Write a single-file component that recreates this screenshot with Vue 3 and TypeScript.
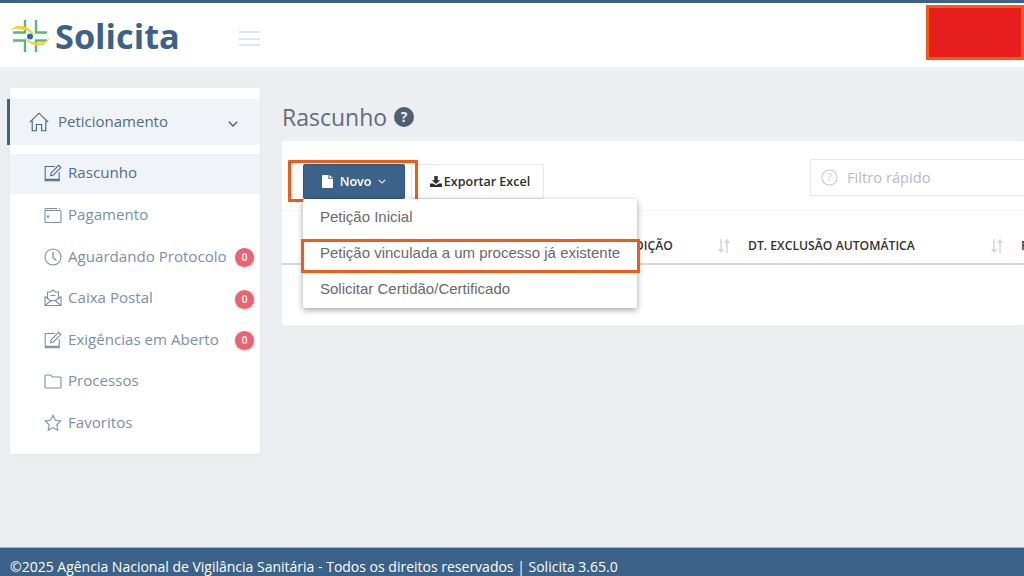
<script setup lang="ts">
interface NavItem { label: string; icon: string; badge?: number; active?: boolean }
const items: NavItem[] = [
  { label: 'Rascunho', icon: 'edit', active: true },
  { label: 'Pagamento', icon: 'wallet' },
  { label: 'Aguardando Protocolo', icon: 'clock', badge: 0 },
  { label: 'Caixa Postal', icon: 'mail', badge: 0 },
  { label: 'Exigências em Aberto', icon: 'edit', badge: 0 },
  { label: 'Processos', icon: 'folder' },
  { label: 'Favoritos', icon: 'star' },
]
const menu = ['Petição Inicial', 'Petição vinculada a um processo já existente', 'Solicitar Certidão/Certificado']
</script>

<template>
  <div class="page">
    <header class="topbar">
      <div class="brand">
        <svg class="logo" viewBox="0 0 40 34" width="40" height="34">
          <g fill="none" stroke="#56b97c" stroke-width="2.400">
            <path d="M15 1V13.500H3" />
            <path d="M26 1V13.500H37" />
            <path d="M3 21.500H15V33" />
            <path d="M37 21.500H26V33" />
          </g>
          <path d="M0 12C8 2 20 7 27 19C21 12 9 7 0 12Z" fill="#f3d432" />
          <path d="M40 19C33 31 20 28 13 17C20 24 31 27 40 19Z" fill="#f3d432" />
          <circle cx="20" cy="17.500" r="3" fill="#1f6fc0" />
        </svg>
        <span class="brand-name">Solicita</span>
      </div>
      <div class="burger"><i></i><i></i><i></i></div>
      <div class="redact"></div>
    </header>

    <div class="body">
      <aside class="sidebar">
        <div class="group">
          <svg class="home" viewBox="0 0 20 20" width="20" height="20" fill="none" stroke="#3d6286" stroke-width="1.100">
            <path d="M.8 10.200 10 1.200l9.200 9M3.200 8.500v10.200h4.200v-6.200h5.200v6.200h4.200V8.500" />
          </svg>
          <span class="group-label">Peticionamento</span>
          <svg class="chev" viewBox="0 0 10 6" width="10" height="6" fill="none" stroke="#3d6286" stroke-width="1.400"><path d="M.8.800 5 5 9.200.8" /></svg>
        </div>
        <ul class="nav">
          <li v-for="it in items" :key="it.label" class="nav-item" :class="{ active: it.active }">
            <svg class="nav-icon" viewBox="0 0 18 18" width="18" height="18" fill="none" stroke="currentColor" stroke-width="1.100">
              <template v-if="it.icon === 'edit'">
                <path d="M11 2.500H1.200v14.300h14V8" />
                <path d="M1.200 15.600h14" stroke-width="1.600" />
                <path d="M6.500 11.800l.7-3L14.600 1.400l2.200 2.200-7.400 7.400z" />
              </template>
              <template v-else-if="it.icon === 'wallet'">
                <path d="M1 5.500V15.500a1 1 0 0 0 1 1h14a1 1 0 0 0 1-1V5.500a1 1 0 0 0-1-1H2a1 1 0 0 0-1 1z" />
                <path d="M1 5V3.500a1 1 0 0 1 1-1h11M15 2.500h1" />
                <circle cx="4" cy="10.500" r=".7" fill="currentColor" />
              </template>
              <template v-else-if="it.icon === 'clock'">
                <circle cx="9" cy="9" r="8" />
                <path d="M9 3.800V9.400l3.400 3" stroke-width="1.300" />
              </template>
              <template v-else-if="it.icon === 'mail'">
                <path d="M1 7.500v9h16v-9M1 16.500 7 11.500h4l6 5" />
                <path d="M1 7.500 3.500 9.500V3h3L9 1l2.500 2h3v6.500l2.500-2M3.500 9.500 7 12M14.500 9.500 11 12" />
                <path d="M6.500 6.500h5" />
              </template>
              <template v-else-if="it.icon === 'folder'">
                <path d="M1 4a1 1 0 0 1 1-1h4.500l2 2H16a1 1 0 0 1 1 1v9a1 1 0 0 1-1 1H2a1 1 0 0 1-1-1z" />
              </template>
              <template v-else>
                <path d="M9 1.300l2.400 5 5.400.7-4 3.800 1 5.400L9 13.600l-4.800 2.600 1-5.400-4-3.800 5.400-.7z" />
              </template>
            </svg>
            <span class="nav-label">{{ it.label }}</span>
            <span v-if="it.badge !== undefined" class="badge">{{ it.badge }}</span>
          </li>
        </ul>
      </aside>

      <main class="content">
        <h1 class="title">
          Rascunho
          <svg viewBox="0 0 20 20" width="20" height="20"><circle cx="10" cy="10" r="10" fill="#4f5f6b" /><text x="10" y="15" text-anchor="middle" font-size="14" font-weight="700" font-family="Open Sans, sans-serif" fill="#eceef2">?</text></svg>
        </h1>
        <section class="card">
          <div class="toolbar">
            <div class="btn-wrap">
              <button class="btn primary">
                <svg viewBox="0 0 12 14" width="11" height="13"><path d="M0 1a1 1 0 0 1 1-1h6v4h5v9a1 1 0 0 1-1 1H1a1 1 0 0 1-1-1z M8 0l4 3H8z" fill="#fff" /></svg>
                Novo
                <svg viewBox="0 0 10 6" width="8" height="5" fill="none" stroke="#fff" stroke-width="1.300"><path d="M1 1l4 4 4-4" /></svg>
              </button>
              <div class="mark mark-btn"></div>
              <ul class="dropdown">
                <li v-for="m in menu" :key="m">{{ m }}</li>
              </ul>
              <div class="mark mark-row"></div>
            </div>
            <button class="btn export">
              <svg viewBox="0 0 14 13" width="12" height="11" fill="#2d2d2d"><path d="M5 0h4v5h3L7 9.500 2 5h3zM0 9h3.500L7 11l3.500-2H14v4H0z" /></svg>
              Exportar Excel
            </button>
            <div class="filter">
              <svg viewBox="0 0 18 18" width="17" height="17" fill="none" stroke="#c3c7ce" stroke-width="1.100"><circle cx="9" cy="9" r="8" /><text x="9" y="13" text-anchor="middle" font-size="11" font-family="Open Sans, sans-serif" fill="#c3c7ce" stroke="none">?</text></svg>
              <span class="filter-text">Filtro rápido</span>
            </div>
          </div>
          <div class="thead">
            <div class="th th-1">
              <span>EDIÇÃO</span>
              <svg class="sort" viewBox="0 0 12 14" width="12" height="14" fill="none" stroke="#d4d6d9" stroke-width="1.500"><path d="M3 0v13M.5 10 3 13l2.500-3M9 14V1M6.500 4 9 1l2.500 3" /></svg>
            </div>
            <div class="th th-2">
              <span>DT. EXCLUSÃO AUTOMÁTICA</span>
              <svg class="sort" viewBox="0 0 12 14" width="12" height="14" fill="none" stroke="#d4d6d9" stroke-width="1.500"><path d="M3 0v13M.5 10 3 13l2.500-3M9 14V1M6.500 4 9 1l2.500 3" /></svg>
            </div>
            <div class="th th-3"><span>P</span></div>
          </div>
        </section>
      </main>
    </div>

    <footer class="footer">©2025 Agência Nacional de Vigilância Sanitária - Todos os direitos reservados | Solicita 3.65.0</footer>
  </div>
</template>

<style>
html, body { margin: 0; overflow: hidden; }
</style>

<style scoped>
.page {
  width: 1024px; height: 576px; display: flex; flex-direction: column;
  background: #eceef2; font-family: "Open Sans", sans-serif; overflow: hidden;
}
.topbar {
  height: 64px; flex: none; display: flex; align-items: center;
  background: #fff; border-top: 3px solid #3b6288;
}
.brand { display: flex; align-items: center; margin-left: 10px; width: 229px; gap: 5px; margin-top: 2px; }
.logo { flex: none; }
.brand-name { font-size: 34.300px; font-weight: 700; color: #3b6288; line-height: 40px; }
.burger { width: 21px; display: flex; flex-direction: column; gap: 4.500px; margin-top: 7px; }
.burger i { display: block; height: 2px; background: #dfe6ee; }
.redact {
  margin-left: auto; width: 98px; height: 55px; box-sizing: border-box; margin-top: -6px;
  background: #e61e1e; border: 3px solid #f55a14;
}
.body { flex: 1; display: flex; align-items: flex-start; min-height: 0; }
.sidebar {
  width: 250px; height: 366px; margin: 21px 0 0 10px; background: #fff; flex: none; box-sizing: border-box;
  padding-top: 11px; border-radius: 2px; box-shadow: 0 1px 3px rgba(0,0,0,.06);
}
.group {
  height: 46px; display: flex; align-items: center; background: #f0f3f7; position: relative; padding-left: 19px;
}
.group::before { content: ""; position: absolute; left: -3px; top: 0; bottom: 0; width: 3px; background: #3b6288; }
.home { flex: none; margin-bottom: 1px; }
.group-label { margin-left: 9px; font-size: 15px; color: #4e6d8e; margin-bottom: 3px; }
.chev { margin-left: auto; margin-right: 22px; margin-top: 3px; }
.nav { list-style: none; margin: 9px 0 0; padding: 0; }
.nav-item {
  height: 41.500px; display: flex; align-items: center; padding-left: 34px; color: #7a90a8; position: relative; box-sizing: border-box;
}
.nav-item.active { background: #f0f3f7; color: #4e6d8e; height: 40px; margin-bottom: 1.500px; }
.nav-icon { flex: none; margin-bottom: 2px; }
.nav-label { margin-left: 6px; font-size: 15.100px; white-space: nowrap; margin-bottom: 4px; }
.badge {
  position: absolute; left: 225px; top: 11px; width: 19px; height: 19px; border-radius: 50%;
  background: #ee6270; color: #fff; font-size: 10px; font-weight: 600; line-height: 19px; text-align: center;
  box-shadow: 0 1px 3px rgba(0,0,0,.2);
}
.content { flex: 1; min-width: 0; margin-left: 22px; padding-top: 32px; }
.title {
  margin: 0; height: 42px; display: flex; align-items: center; gap: 7px;
  font-size: 23px; font-weight: 400; color: #5f6e7a; line-height: 36px; box-sizing: border-box; padding-bottom: 6px;
}
.card { width: 742px; height: 184px; background: #fff; box-sizing: border-box; border-radius: 2px; }
.toolbar { height: 70px; display: flex; align-items: flex-start; padding: 23px 0 0 21px; box-sizing: border-box; border-bottom: 1px solid #f3f4f6; position: relative; }
.btn-wrap { position: relative; }
.btn {
  height: 35px; box-sizing: border-box; display: flex; align-items: center; justify-content: center; cursor: pointer;
  font-family: inherit; font-size: 12.500px; border-radius: 2px;
}
.primary { width: 102px; background: #3b6288; color: #fff; border: 1px solid #35597c; gap: 7px; font-weight: 600; box-shadow: 0 1px 2px rgba(0,0,0,.2); }
.export { width: 133px; margin-left: 6px; background: #fff; color: #2d2d2d; border: 1px solid #e4e6ea; gap: 2px; font-weight: 600; padding: 0 0 0 5px; }
.mark { position: absolute; border: 3px solid #f55a14; box-sizing: border-box; pointer-events: none; }
.mark-btn { left: -15px; top: -4px; width: 130px; height: 42px; border-radius: 1px; }
.mark-row { left: -2px; top: 75px; width: 339px; height: 34px; z-index: 3; }
.dropdown {
  position: absolute; z-index: 2; left: 0; top: 35px; width: 334px; height: 109px; box-sizing: border-box;
  list-style: none; margin: 0; padding: 0; background: #fff; border-radius: 2px;
  box-shadow: 0 2px 6px rgba(0,0,0,.38);
  font-family: "Liberation Sans", Arial, sans-serif; font-size: 15px; color: #6a6a6a;
}
.dropdown li { height: 36px; line-height: 36px; padding-left: 17px; white-space: nowrap; }
.filter {
  position: absolute; left: 528px; top: 18px; width: 240px; height: 37px; box-sizing: border-box;
  border: 1px solid #e6e8f0; display: flex; align-items: center; padding-left: 10px; gap: 9px;
  color: #b4bccb; font-size: 14.700px; background: #fff;
}
.filter-text { margin-bottom: 2px; }
.thead { height: 54px; box-sizing: border-box; border-bottom: 2px solid #d6d8db; display: flex; align-items: center; padding-top: 16px; font-size: 12.200px; font-weight: 600; color: #333; position: relative; overflow: hidden; }
.th { display: flex; align-items: center; white-space: nowrap; box-sizing: border-box; flex: none; }
.th-1 { width: 466px; padding-left: 346px; justify-content: space-between; padding-right: 18px; }
.th-2 { width: 273px; justify-content: space-between; padding-right: 18px; }
.sort { flex: none; margin-top: 1px; }
.footer {
  height: 29px; flex: none; box-sizing: border-box; border-top: 1px solid #a9b6c4; background: #3b6288; color: #fff;
  padding-left: 10px; font-size: 14px; line-height: 38px; white-space: nowrap; overflow: hidden;
}
</style>
